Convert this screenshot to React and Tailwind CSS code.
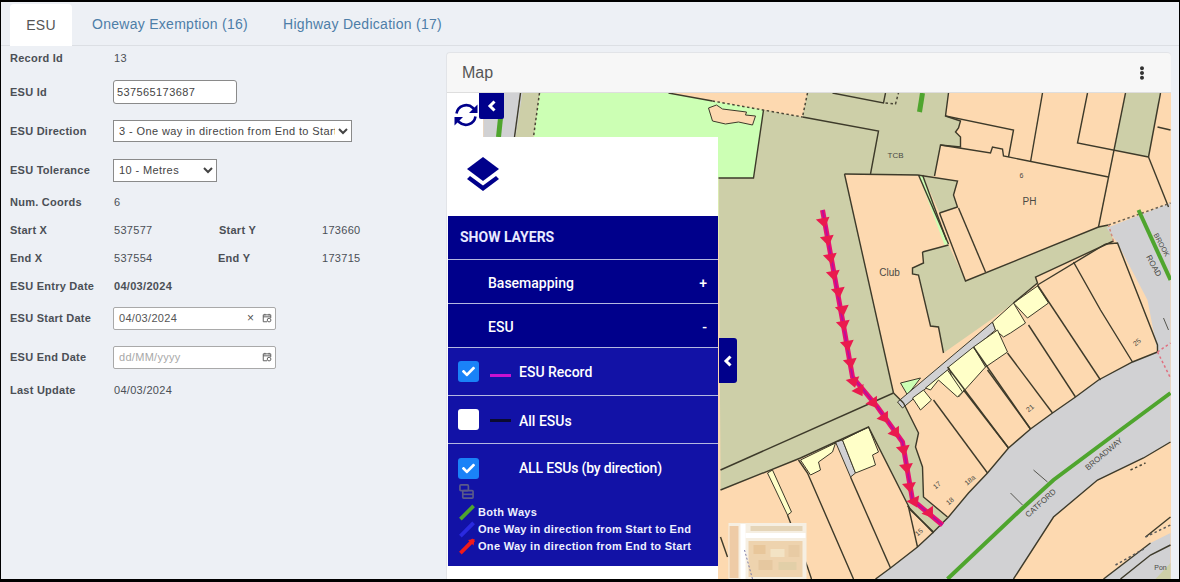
import React from "react";
import { FaEllipsisV, FaCheck } from "react-icons/fa";

const Y = "#ffffc8", O = "#cdcfa8", G = "#d1d1d3", L = "#ccffb4", P = "#fdd9b0", S = "#3d3a2a";

const fills = [
  [O, "668,93 712,101 802,117 878,131 870,174 844,174 893,393 720,470 718,178 753,178 763,110 712,101 668,93 668,93"],
  [L, "539,93 668,93 712,101 763,110 753,178 718,178 718,240 520,240 533,137"],
  [O, "518,93 539,93 533,137 515,137"],
  [G, "483,93 522,93 515,137 483,137"],
  [O, "807,93 948,93 945,116 960,121 958,128 955,132 960,137 960,147 940,145 934,176 870,174 878,131 802,117"],
  [O, "922,175 957,181 953,195 957,207 939,213"],
  [L, "918,175 922,175 948,244 944,245"],
  [O, "922,252 948,245 965,281 1098,227 1108,225 1113,241 1105,244 1035,277 1037,283 1013,303 990,320 943,353 938,327 930,326 927,310 928,317 918,275 912,274 912,268 923,263"],
  [O, "1125,93 1160,93 1148,157 1113,150"],
  [O, "720,490 800,458 835,442 868,427 910,510 933,532 947,517 923,497 922,467 915,447 918,433 903,403 893,393 720,470"],
  [G, "1106,228 1170,203 1170,442 1143,458 1097,480 1053,517 1013,579 875,579 890,568 917,547 932,533 948,517 968,493 987,473 1008,448 1030,429 1052,413 1075,397 1098,380 1132,362 1157,352 1147,300 1117,243"],
  [L, "900,383 920,378 907,395", 1],
  [G, "897,402 992,322 995,330 902,408", 1],
  [Y, "800,460 835,443 832,452 818,462 820,470 810,475", 1],
  [G, "835,442 842,440 855,473 850,477", 1],
  [Y, "842,440 868,427 878,452 872,455 875,465 855,473", 1],
  [Y, "767,473 772,470 791,512 787,515", 1],
  [Y, "992,322 1013,303 1025,323 1010,333 1003,337 995,330", 1],
  [Y, "1013,303 1037,286 1048,303 1027,318", 1],
  [Y, "973,347 997,330 1007,352 985,367", 1],
  [Y, "948,367 973,347 985,367 958,397", 1],
  [Y, "925,388 947,370 962,392 957,397 938,380 930,390", 1],
  [Y, "912,398 923,390 931,400 920,410", 1],
  [G, "1103,579 1150,543 1170,533 1170,579"],
  [O, "1155,579 1170,563 1170,579"],
];

const lines = [
  "668,93 712,101", "802,117 878,131 870,174", "832,93 883,103 885,93", "948,93 945,116 1013,130 1008,157",
  "763,110 753,178 718,178", "520,93 514,137", "945,116 960,121 958,128 955,132 960,137 960,147 940,145 934,176",
  "1042,93 1030,162", "1087,93 1077,143 1148,157", "1125,93 1098,227", "1160,93 1148,157", "1157,127 1170,130", "1148,157 1168,207",
  "940,145 990,153 992,147 1002,149 1003,156 1108,177",
  "844,174 917,175 957,181 953,195 957,207 939,213", "958,208 985,272", "939,213 965,281 1098,227 1108,225",
  "922,252 948,245", "922,252 923,263 912,268 912,274 918,275 930,326 938,327 943,353", "918,175 948,244", "922,175 946,240",
  "844,174 893,393", "720,470 893,393", "1113,241 1035,277 1037,283 1013,303", "1105,244 1117,243 1157,345 1157,352",
  "720,490 800,458 835,442 868,427 910,510 933,532", "903,403 918,433 915,447 922,467 923,497 947,517",
  "893,393 903,403", "798,460 807,473 853,579", "850,477 890,568", "720,537 727,557", "787,515 807,567 811,579", "908,507 917,547", "907,506 933,533",
  "933,400 987,473", "947,367 1008,448", "973,347 1030,429", "987,370 1030,429", "963,390 1008,448", "1007,353 1052,413", "1028,325 1075,397",
  "1037,285 1100,380", "1073,262 1100,310 1132,362", "1157,352 1132,362 1098,380 1075,397 1052,413 1030,429 1008,448 987,473 968,493 948,517 932,533 917,547 890,568 875,579",
  "1170,442 1143,458 1097,480 1053,517 1013,579", "1170,517 1145,537", "1103,579 1150,543", "1120,579 1150,555 1170,545",
  "1037,285 1105,244",
];
const roadMarks = ["1010,493 1022,505", "1033,470 1047,482", "1163,318 1168,330"];

const dots = [
  ["712,101 802,117", "#4a4636"], ["807,93 802,117", "#4a4636"], ["885,103 895,104 898,93", "#4a4636"], ["539,93 533,137", "#4a4636"],
  ["1108,225 1170,203", "#6a6050"], ["1113,241 1108,225", "#d08a7a"], ["1157,352 1170,343", "#e07080"], ["1157,352 1170,378", "#e07080"],
  ["1145,537 1170,525", "#5a5a5a"], ["1115,565 1145,548", "#5a5a5a"], ["1130,470 1145,463", "#4a4636"],
];

const pts = [[822,210],[842,320],[852,377],[877,407],[902,442],[912,500],[942,525]];
const arrows = [[823,222,12],[827,240,10],[830,258,10],[833,275,10],[838,292,10],[842,310,10],[843,325,10],[847,345,10],[850,363,10],[853,382,15],[859,391,30],[873,403,35],[884,418,35],[895,433,35],[903,450,10],[906,468,8],[909,487,8],[914,502,25],[929,513,35]];

const labels = [
  ["TCB", 895, 158, 8, 0], ["6", 1021, 178, 7, 0], ["PH", 1029, 205, 10, 0], ["Club", 889, 276, 10, 0], ["BROOK", 1159, 246, 7, 62], ["ROAD", 1151, 267, 8, 62],
  ["25", 1138, 344, 7, -40], ["21", 1031, 410, 7, -40], ["18a", 971, 482, 7, -40], ["17", 938, 487, 7, -40], ["18", 951, 503, 7, -40], ["15", 920, 534, 7, -40],
  ["CATFORD", 1042, 505, 8, -42], ["BROADWAY", 1105, 456, 8, -40], ["Pon", 1160, 570, 7, 0],
];

const thumb = [
  [729, 526, 9, 52, "#eecba6"], [748, 541, 54, 36, "#eed3ae"], [750, 526, 52, 5, "#e5d5b8"], [753, 545, 12, 9, "#e8c69a"], [770, 549, 14, 8, "#f3e3c4"],
  [758, 560, 14, 10, "#e6c8a0"], [778, 562, 18, 8, "#e2cfa8"], [788, 545, 11, 12, "#e8cba4"],
];

function MapArt() {
  return (
    <svg viewBox="447 93 723 486" className="absolute inset-0 h-full w-full bg-[#fdd9b0]">
      {fills.map(([f, p, o], i) => <polygon key={i} points={p} fill={f} stroke={o ? S : "none"} strokeWidth="1" />)}
      {lines.map((p, i) => <polyline key={i} points={p} fill="none" stroke={S} strokeWidth="1.4" />)}
      {roadMarks.map((p, i) => <polyline key={i} points={p} fill="none" stroke="#55554e" strokeWidth="1" />)}
      {dots.map(([p, c], i) => <polyline key={i} points={p} fill="none" stroke={c} strokeWidth="1.5" strokeDasharray="2.5 2.5" />)}
      <polygon points="708,108 716,105 722,109 746,112 745,115 755,116 752,125 738,122 725,124 712,121" fill={P} stroke={S} strokeWidth="1" />
      <polyline points="922,93 919,112" stroke="#4fa52e" strokeWidth="5" fill="none" />
      <polyline points="500,118 498,137" stroke="#4fa52e" strokeWidth="5" fill="none" />
      <polyline points="1138,210 1170,280" stroke="#4fa52e" strokeWidth="4" fill="none" />
      <polyline points="1170,393 1120,430 1053,480 1020,510 947,579" stroke="#4fa52e" strokeWidth="4" fill="none" />
      <polyline points={pts.map(p => p.join(",")).join(" ")} stroke="#ea0f74" strokeWidth="5" fill="none" />
      <polyline points={pts.map(p => p.join(",")).join(" ")} stroke="#b4109c" strokeWidth="1.5" fill="none" />
      {arrows.map(([x, y, r], i) => <polygon key={i} points="-7,-4 7,-4 0,6" fill="#ea1a4e" transform={`translate(${x} ${y}) rotate(${-r})`} />)}
      {labels.map(([t, x, y, s, r], i) => (
        <text key={i} x={x} y={y} fontSize={s} fill="#4a4a44" fontFamily="Liberation Sans, sans-serif" textAnchor="middle" transform={`rotate(${r} ${x} ${y})`}>{t}</text>
      ))}
      <g>
        <rect x="728" y="523" width="78" height="56" fill="#f6efe2" />
        <rect x="745" y="533" width="60" height="5" fill="#ffffff" />
        <rect x="740" y="524" width="5" height="55" fill="#ffffff" />
        {thumb.map(([x, y, w, h, c], i) => <rect key={i} x={x} y={y} width={w} height={h} fill={c} />)}
        <polyline points="744,550 752,579" stroke="#7b7ba8" strokeWidth="1" strokeDasharray="2 2" fill="none" />
      </g>
    </svg>
  );
}

const labelCls = "text-[11px] font-bold tracking-[0.25px] text-[#4b4f55]";

function Row({ label, children, className = "" }) {
  return (
    <div className={`flex h-6 items-center ${className}`}>
      <span className={`w-[104px] shrink-0 ${labelCls}`}>{label}</span>
      {children}
    </div>
  );
}
const Value = ({ children, className = "" }) => <span className={`text-[11px] tracking-[0.3px] text-[#4b4f55] ${className}`}>{children}</span>;

function CalIcon() {
  return (
    <svg viewBox="0 0 12 12" className="h-[10px] w-[10px] text-[#555]" fill="none" stroke="currentColor" strokeWidth="1.1">
      <path d="M6 10.5H1.5V2.2h9V6M1.5 4.6h9M3.5 1v2M8.5 1v2" />
      <circle cx="8.5" cy="8.5" r="2.2" />
    </svg>
  );
}

function DateBox({ value, placeholder }) {
  return (
    <div className="-ml-[1px] flex h-[23px] w-[163px] items-center rounded-[2px] border border-[#a9a9a9] bg-white pl-[5px] pr-[3px]">
      <span className={`flex-1 text-[11px] tracking-[0.3px] ${value ? "text-[#555]" : "text-[#a8a8a8]"}`}>{value || placeholder}</span>
      {value && <span className="mr-[8px] text-[12px] leading-none text-[#555]">×</span>}
      <CalIcon />
    </div>
  );
}

function LayerRow({ children, className = "" }) {
  return <div className={`flex items-center border-b border-[#b4b8e0] text-white ${className}`}>{children}</div>;
}

function Check({ on }) {
  return (
    <span className={`flex h-[21px] w-[21px] shrink-0 items-center justify-center rounded-[3px] text-white ${on ? "bg-[#1a82f8]" : "bg-white"}`}>
      {on && <FaCheck className="h-[13px] w-[13px]" />}
    </span>
  );
}

function LegendLine({ color, text, arrow }) {
  return (
    <div className="flex h-[17px] items-center">
      <svg viewBox="0 0 18 18" className="h-[17px] w-[18px] shrink-0">
        <line x1="2" y1="16" x2="16" y2="2" stroke={color} strokeWidth="4" />
        {arrow && <polygon points="10,2 17,1 16,8" fill={color} />}
      </svg>
      <span className="ml-[2px] text-[11px] font-bold tracking-[0.3px] text-[#eef0ff]">{text}</span>
    </div>
  );
}

function Chevron() {
  return (
    <svg viewBox="0 0 10 12" className="h-[12px] w-[10px]" fill="none" stroke="white" strokeWidth="3">
      <path d="M7.5 1.5 3 6l4.5 4.5" />
    </svg>
  );
}

function SyncIcon() {
  return (
    <svg viewBox="0 0 26 26" className="absolute left-[6px] top-[9px] z-20 h-[26px] w-[26px]" fill="none" stroke="#00008b" strokeWidth="2.6">
      <path d="M3.5 11.5A9.8 9.8 0 0 1 20 6l2 2" />
      <path d="M22.5 14.5A9.8 9.8 0 0 1 6 20l-2-2" />
      <polygon points="24.5,2.5 24.5,11 16,11" fill="#00008b" stroke="none" />
      <polygon points="1.5,23.5 1.5,15 10,15" fill="#00008b" stroke="none" />
    </svg>
  );
}

function LayersPanel() {
  const roboto = "font-['Roboto',sans-serif]";
  return (
    <div className={`absolute left-0 top-0 z-10 flex h-full w-[271px] flex-col ${roboto}`}>
      <div className="h-[44px] w-[36px] bg-white" />
      <div className="flex h-[79px] items-start bg-white pl-[19px] pt-[19px]">
        <svg viewBox="0 0 34 36" className="h-[36px] w-[34px]" fill="#00008b">
          <polygon points="17,1 33,13 17,25 1,13" />
          <polygon points="4,20 17,29.5 30,20 33,23 17,35 1,23" />
        </svg>
      </div>
      <div className="flex flex-1 flex-col bg-white pl-[1px]">
        <div className="flex h-[44px] items-center border-b border-[#b4b8e0] bg-[#00008b] pl-[12px] text-[14px] font-bold text-[#e8eaff]">SHOW LAYERS</div>
        <LayerRow className="h-[44px] justify-between bg-[#00008b] pl-[40px] pr-[11px] pt-[4px] text-[14px] font-medium"><span>Basemapping</span><span>+</span></LayerRow>
        <LayerRow className="h-[44px] justify-between bg-[#00008b] pl-[40px] pr-[11px] pt-[4px] text-[14px] font-medium"><span>ESU</span><span>-</span></LayerRow>
        <LayerRow className="h-[48px] bg-[#1212a6] pl-[10px]">
          <Check on />
          <span className="ml-[11px] h-[3px] w-[21px] translate-y-[4px] bg-[#c912d0]" />
          <span className="ml-[8px] translate-y-[1px] text-[14px] font-medium">ESU Record</span>
        </LayerRow>
        <LayerRow className="h-[48px] bg-[#1212a6] pl-[10px]">
          <Check />
          <span className="ml-[11px] h-[3px] w-[21px] translate-y-[1px] bg-[#0a0a30]" />
          <span className="ml-[8px] translate-y-[2px] text-[14px] font-medium">All ESUs</span>
        </LayerRow>
        <div className="flex h-[122px] flex-col bg-[#1212a6] pl-[10px] pt-[14px] text-white">
          <div className="flex items-center">
            <Check on />
            <span className="ml-[40px] text-[14px] font-medium tracking-[-0.18px]">ALL ESUs (by direction)</span>
          </div>
          <svg viewBox="0 0 16 16" className="ml-[1px] mt-[5px] h-[15px] w-[15px]" fill="none" stroke="#5a5a8a" strokeWidth="1.8">
            <rect x="1" y="1" width="9" height="6" rx="1" />
            <rect x="4" y="7" width="11" height="8" rx="1" />
            <path d="M4 11h11" />
          </svg>
          <div className="mt-[5px] font-['Liberation_Sans',sans-serif]">
            <LegendLine color="#4fa52e" text="Both Ways" />
            <LegendLine color="#2a2ae0" text="One Way in direction from Start to End" />
            <LegendLine color="#f01a1a" text="One Way in direction from End to Start" arrow />
          </div>
        </div>
        <div className="flex-1" />
      </div>
    </div>
  );
}

export default function App() {
  return (
    <div className="h-[582px] w-[1180px] overflow-hidden border-b-[3px] border-l border-r border-t-2 border-black bg-[#edf0f5] font-['Liberation_Sans',sans-serif]">
      <div className="flex h-[44px] items-end border-b border-[#dcdfe4] pl-[9px]">
        <div className="flex h-[42px] w-[62px] translate-y-[1px] items-center justify-center rounded-t-[4px] bg-white pt-[1px] text-[14px] tracking-[0.3px] text-[#555]">ESU</div>
        <div className="flex h-[42px] items-center pl-[20px] pt-[1px] text-[14px] tracking-[0.28px] text-[#4d7ea8]">Oneway Exemption (16)</div>
        <div className="flex h-[42px] items-center pl-[35px] pt-[1px] text-[14px] tracking-[0.28px] text-[#4d7ea8]">Highway Dedication (17)</div>
      </div>
      <div className="flex">
        <div className="w-[445px] shrink-0 pl-[9px]">
          <Row label="Record Id"><Value>13</Value></Row>
          <Row label="ESU Id" className="mt-[10px]">
            <input readOnly value="537565173687" className="-ml-[1px] h-[24px] w-[124px] rounded-[3px] border border-[#8a8a8a] bg-white px-[3px] text-[11px] tracking-[0.4px] text-[#444]" />
          </Row>
          <Row label="ESU Direction" className="mt-[15px]">
            <select defaultValue="3" className="-ml-[1px] h-[22px] w-[239px] border border-[#8a8a8a] bg-white pl-[1px] text-[11px] tracking-[0.4px] text-[#444]">
              <option value="3">3 - One way in direction from End to Start</option>
            </select>
          </Row>
          <Row label="ESU Tolerance" className="mt-[15px]">
            <select defaultValue="10" className="-ml-[1px] h-[23px] w-[104px] border border-[#8a8a8a] bg-white pl-[1px] text-[11px] tracking-[0.4px] text-[#444]">
              <option value="10">10 - Metres</option>
            </select>
          </Row>
          <Row label="Num. Coords" className="mt-[8px]"><Value>6</Value></Row>
          <Row label="Start X" className="mt-[4px]"><Value className="w-[105px]">537577</Value><span className={`w-[103px] ${labelCls}`}>Start Y</span><Value>173660</Value></Row>
          <Row label="End X" className="mt-[4px]"><Value className="w-[104px]">537554</Value><span className={`w-[104px] ${labelCls}`}>End Y</span><Value>173715</Value></Row>
          <Row label="ESU Entry Date" className="mt-[4px]"><Value className="font-bold">04/03/2024</Value></Row>
          <Row label="ESU Start Date" className="mt-[8px]"><DateBox value="04/03/2024" /></Row>
          <Row label="ESU End Date" className="mt-[15px]"><DateBox placeholder="dd/MM/yyyy" /></Row>
          <Row label="Last Update" className="mt-[9px]"><Value>04/03/2024</Value></Row>
        </div>
        <div className="mt-[6px] flex h-[527px] w-[725px] flex-col rounded-t-[4px] border-l border-t border-[#e2e4e8] bg-[#f7f7f7]">
          <div className="flex h-[40px] items-center justify-between border-b border-[#dedede] pl-[15px] pr-[22px] text-[16px] text-[#555]">
            <span>Map</span>
            <FaEllipsisV className="h-[14px] w-[14px] text-[#333]" />
          </div>
          <div className="relative flex-1 overflow-hidden">
            <MapArt />
            <LayersPanel />
            <SyncIcon />
            <div className="absolute left-[32px] top-0 z-20 flex h-[26px] w-[25px] items-center justify-center rounded-b-[2px] bg-[#00008b]"><Chevron /></div>
            <div className="absolute left-[272px] top-[245px] z-20 flex h-[45px] w-[18px] items-center justify-center rounded-r-[3px] bg-[#00008b]"><Chevron /></div>
          </div>
        </div>
      </div>
    </div>
  );
}
